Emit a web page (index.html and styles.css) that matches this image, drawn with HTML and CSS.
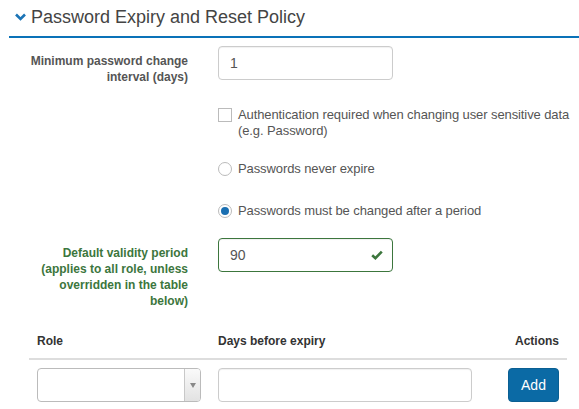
FILE: index.html
```html
<!DOCTYPE html>
<html>
<head>
<meta charset="utf-8">
<link rel="stylesheet" href="styles.css">
</head>
<body>
<div class="page">
  <div class="head">
    <svg class="chev" width="11" height="8" viewBox="0 0 11 8"><path d="M1 1.5 L5.5 6 L10 1.5" fill="none" stroke="#1b74b6" stroke-width="2.6"/></svg>
    <span class="title">Password Expiry and Reset Policy</span>
  </div>

  <div class="form">
    <div class="row row-min">
      <label class="lbl">Minimum password change interval (days)</label>
      <div class="ctl"><div class="input">1</div></div>
    </div>

    <div class="row row-check">
      <div class="lbl"></div>
      <div class="ctl opt">
        <span class="box"></span>
        <span class="opt-text">Authentication required when changing user sensitive data (e.g. Password)</span>
      </div>
    </div>

    <div class="row row-r1">
      <div class="lbl"></div>
      <div class="ctl opt">
        <span class="radio"></span>
        <span class="opt-text">Passwords never expire</span>
      </div>
    </div>

    <div class="row row-r2">
      <div class="lbl"></div>
      <div class="ctl opt">
        <span class="radio on"><span class="dot"></span></span>
        <span class="opt-text">Passwords must be changed after a period</span>
      </div>
    </div>

    <div class="row row-valid">
      <label class="lbl ok">Default validity period (applies to all role, unless overridden in the table below)</label>
      <div class="ctl">
        <div class="input input-ok">90
          <svg class="tick" width="12" height="10" viewBox="0 0 12 10"><path d="M1.2 5.2 L4.4 8.2 L10.8 1.6" fill="none" stroke="#3c763d" stroke-width="2.6"/></svg>
        </div>
      </div>
    </div>
  </div>

  <div class="table">
    <div class="thead">
      <div class="c c-role">Role</div>
      <div class="c c-days">Days before expiry</div>
      <div class="c c-act">Actions</div>
    </div>
    <div class="tbody">
      <div class="c c-role">
        <div class="select"><span class="arrow"><span class="tri"></span></span></div>
      </div>
      <div class="c c-days"><div class="input wide"></div></div>
      <div class="c c-act"><button class="btn">Add</button></div>
    </div>
  </div>
</div>
</body>
</html>
```

FILE: styles.css
```css
* { box-sizing: border-box; }
html, body { margin: 0; padding: 0; background: #fff; }
body {
  font-family: "Liberation Sans", Arial, Helvetica, sans-serif;
  font-size: 12px;
  color: #555;
  width: 579px;
  height: 409px;
  overflow: hidden;
}
.page { position: relative; }

.head {
  margin-left: 9px;
  height: 38px;
  border-bottom: 2px solid #0a72b8;
  display: flex;
  align-items: center;
  padding-left: 6px;
  padding-bottom: 3px;
}
.chev { margin-right: 5px; margin-top: 1px; }
.title {
  font-size: 18px;
  color: #444;
  line-height: 22px;
}

.form { padding-left: 28px; }
.row {
  display: flex;
  gap: 30px;
}
.lbl {
  width: 160px;
  flex: none;
  text-align: right;
  font-weight: bold;
  line-height: 16px;
  padding-top: 7px;
  color: #555;
}
.lbl.ok { color: #3c763d; }
.ctl { flex: 1; }

.row-min { margin-top: 8px; }
.row-check { margin-top: 22px; }
.row-r1 { margin-top: 22px; }
.row-r2 { margin-top: 26px; }
.row-valid { margin-top: 19px; }
.row-check .lbl, .row-r1 .lbl, .row-r2 .lbl { padding-top: 0; }

.input {
  width: 175px;
  height: 34px;
  border: 1px solid #ccc;
  border-radius: 4px;
  font-size: 14px;
  color: #555;
  padding: 0 11px;
  display: flex;
  align-items: center;
  box-shadow: inset 0 1px 1px rgba(0,0,0,0.06);
}
.input-ok {
  border-color: #3c763d;
  justify-content: space-between;
}
.tick { margin-right: -2px; }

.opt {
  display: flex;
  align-items: flex-start;
  line-height: 16px;
  font-size: 13px;
  letter-spacing: -0.1px;
  color: #555;
}
.opt-text { margin-left: 6px; }
.box {
  width: 14px;
  height: 14px;
  border: 1px solid #bbb;
  background: #fff;
  margin-top: 1px;
  flex: none;
}
.radio {
  width: 14px;
  height: 14px;
  border: 1px solid #bbb;
  border-radius: 50%;
  margin-top: 1px;
  flex: none;
  display: flex;
  align-items: center;
  justify-content: center;
}
.radio .dot {
  width: 8px;
  height: 8px;
  border-radius: 50%;
  background: #1a6fb2;
}

.table {
  margin-left: 29px;
  width: 538px;
  margin-top: 16px;
}
.thead, .tbody { display: flex; }
.thead {
  border-bottom: 2px solid #ddd;
  font-weight: bold;
  color: #333;
  line-height: 17px;
}
.c { padding: 8px; }
.c-role { width: 181px; }
.c-days { width: 270px; }
.c-act { flex: 1; text-align: right; }
.tbody .c-act { display: flex; justify-content: flex-end; }

.select {
  width: 164px;
  height: 34px;
  border: 1px solid #bbb;
  border-radius: 4px;
  display: flex;
  justify-content: flex-end;
  overflow: hidden;
}
.arrow {
  width: 16px;
  height: 100%;
  border-left: 1px solid #c8c8c8;
  background: linear-gradient(#fafafa, #e2e2e2);
  display: flex;
  align-items: center;
  justify-content: center;
}
.tri {
  width: 0; height: 0;
  border-left: 3.5px solid transparent;
  border-right: 3.5px solid transparent;
  border-top: 5px solid #888;
}
.input.wide { width: 254px; }

.btn {
  width: 51px;
  height: 34px;
  border: 1px solid #0a5f92;
  border-radius: 4px;
  background: #0b6aa5;
  color: #fff;
  font-family: "Liberation Sans", Arial, sans-serif;
  font-size: 14px;
  padding: 0;
}
```
